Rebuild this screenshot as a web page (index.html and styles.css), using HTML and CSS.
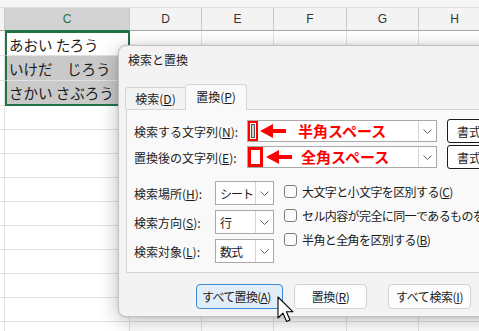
FILE: index.html
```html
<!DOCTYPE html>
<html lang="ja">
<head>
<meta charset="utf-8">
<title>検索と置換</title>
<link rel="stylesheet" href="styles.css">
</head>
<body>
<div class="sheet">
  <div class="topstrip"></div>
  <div class="grow head">
    <div class="cell"></div>
    <div class="cell selcol">C</div>
    <div class="cell">D</div>
    <div class="cell">E</div>
    <div class="cell">F</div>
    <div class="cell">G</div>
    <div class="cell">H</div>
    <div class="cell"></div>
  </div>
  <div class="grow">
    <div class="cell"></div>
    <div class="cell csel c-top">あおい たろう</div>
    <div class="cell"></div><div class="cell"></div><div class="cell"></div><div class="cell"></div><div class="cell"></div><div class="cell"></div>
  </div>
  <div class="grow">
    <div class="cell"></div>
    <div class="cell csel c-mid">いけだ　じろう</div>
    <div class="cell"></div><div class="cell"></div><div class="cell"></div><div class="cell"></div><div class="cell"></div><div class="cell"></div>
  </div>
  <div class="grow">
    <div class="cell"></div>
    <div class="cell csel c-bot">さかい さぶろう</div>
    <div class="cell"></div><div class="cell"></div><div class="cell"></div><div class="cell"></div><div class="cell"></div><div class="cell"></div>
  </div>
  <div class="grow short"><div class="cell"></div><div class="cell"></div><div class="cell"></div><div class="cell"></div><div class="cell"></div><div class="cell"></div><div class="cell"></div><div class="cell"></div></div>
  <div class="grow short"><div class="cell"></div><div class="cell"></div><div class="cell"></div><div class="cell"></div><div class="cell"></div><div class="cell"></div><div class="cell"></div><div class="cell"></div></div>
  <div class="grow short"><div class="cell"></div><div class="cell"></div><div class="cell"></div><div class="cell"></div><div class="cell"></div><div class="cell"></div><div class="cell"></div><div class="cell"></div></div>
  <div class="grow short"><div class="cell"></div><div class="cell"></div><div class="cell"></div><div class="cell"></div><div class="cell"></div><div class="cell"></div><div class="cell"></div><div class="cell"></div></div>
  <div class="grow short"><div class="cell"></div><div class="cell"></div><div class="cell"></div><div class="cell"></div><div class="cell"></div><div class="cell"></div><div class="cell"></div><div class="cell"></div></div>
  <div class="grow short"><div class="cell"></div><div class="cell"></div><div class="cell"></div><div class="cell"></div><div class="cell"></div><div class="cell"></div><div class="cell"></div><div class="cell"></div></div>
  <div class="grow short"><div class="cell"></div><div class="cell"></div><div class="cell"></div><div class="cell"></div><div class="cell"></div><div class="cell"></div><div class="cell"></div><div class="cell"></div></div>
  <div class="grow short"><div class="cell"></div><div class="cell"></div><div class="cell"></div><div class="cell"></div><div class="cell"></div><div class="cell"></div><div class="cell"></div><div class="cell"></div></div>
  <div class="grow short"><div class="cell"></div><div class="cell"></div><div class="cell"></div><div class="cell"></div><div class="cell"></div><div class="cell"></div><div class="cell"></div><div class="cell"></div></div>
  <div class="grow short"><div class="cell"></div><div class="cell"></div><div class="cell"></div><div class="cell"></div><div class="cell"></div><div class="cell"></div><div class="cell"></div><div class="cell"></div></div>
</div>

<div class="dialog">
  <div class="title">検索と置換</div>
  <div class="tabs">
    <div class="tab tab-off">検索(<u>D</u>)</div>
    <div class="tab tab-on">置換(<u>P</u>)</div>
  </div>
  <div class="panel">
    <div class="frow">
      <div class="flabel">検索する文字列(<u>N</u>):</div>
      <div class="combo wide">
        <div class="cval">
          <span class="mark mark-half"><span class="selbar"></span></span>
          <svg class="arrow" width="26" height="14" viewBox="0 0 26 14"><polygon points="0,7 13,0 13,5 26,5 26,9 13,9 13,14" fill="#ff0000"/></svg>
          <span class="note">半角スペース</span>
        </div>
        <div class="cbtn"><svg width="9" height="5" viewBox="0 0 9 5"><path d="M0.5 0.5 L4.5 4.5 L8.5 0.5" fill="none" stroke="#606060" stroke-width="1"/></svg></div>
      </div>
      <div class="fmtbtn">書式(<u>M</u>)...</div>
    </div>
    <div class="frow second">
      <div class="flabel">置換後の文字列(<u>E</u>):</div>
      <div class="combo wide">
        <div class="cval">
          <span class="mark mark-full"></span>
          <svg class="arrow arrow2" width="26" height="14" viewBox="0 0 26 14"><polygon points="0,7 13,0 13,5 26,5 26,9 13,9 13,14" fill="#ff0000"/></svg>
          <span class="note note2">全角スペース</span>
        </div>
        <div class="cbtn"><svg width="9" height="5" viewBox="0 0 9 5"><path d="M0.5 0.5 L4.5 4.5 L8.5 0.5" fill="none" stroke="#606060" stroke-width="1"/></svg></div>
      </div>
      <div class="fmtbtn">書式(<u>A</u>)...</div>
    </div>
    <div class="lower">
      <div class="opts">
        <div class="orow">
          <div class="olabel">検索場所(<u>H</u>):</div>
          <div class="combo small"><div class="cval">シート</div><div class="cbtn"><svg width="9" height="5" viewBox="0 0 9 5"><path d="M0.5 0.5 L4.5 4.5 L8.5 0.5" fill="none" stroke="#606060" stroke-width="1"/></svg></div></div>
        </div>
        <div class="orow">
          <div class="olabel">検索方向(<u>S</u>):</div>
          <div class="combo small"><div class="cval">行</div><div class="cbtn"><svg width="9" height="5" viewBox="0 0 9 5"><path d="M0.5 0.5 L4.5 4.5 L8.5 0.5" fill="none" stroke="#606060" stroke-width="1"/></svg></div></div>
        </div>
        <div class="orow">
          <div class="olabel">検索対象(<u>L</u>):</div>
          <div class="combo small"><div class="cval">数式</div><div class="cbtn"><svg width="9" height="5" viewBox="0 0 9 5"><path d="M0.5 0.5 L4.5 4.5 L8.5 0.5" fill="none" stroke="#606060" stroke-width="1"/></svg></div></div>
        </div>
      </div>
      <div class="checks">
        <div class="crow"><span class="cbox"></span><span class="clabel">大文字と小文字を区別する(<u>C</u>)</span></div>
        <div class="crow"><span class="cbox"></span><span class="clabel">セル内容が完全に同一であるものを検索する(<u>O</u>)</span></div>
        <div class="crow"><span class="cbox"></span><span class="clabel">半角と全角を区別する(<u>B</u>)</span></div>
      </div>
    </div>
  </div>
  <div class="btns">
    <div class="btn hover b1">すべて置換(<u>A</u>)</div>
    <div class="btn b2">置換(<u>R</u>)</div>
    <div class="btn b3">すべて検索(<u>I</u>)</div>
    <div class="btn b4">次を検索(<u>F</u>)</div>
  </div>
</div>

<svg class="cursor" width="17" height="27" viewBox="0 0 17 27">
  <path d="M1 1 V22 L6 17.2 L9.6 25.5 L13 24 L9.4 15.8 H16 Z" fill="#ffffff" stroke="#000000" stroke-width="1.1" stroke-linejoin="round"/>
</svg>
</body>
</html>
```

FILE: styles.css
```css
html, body {
  margin: 0;
  padding: 0;
}
body {
  width: 479px;
  height: 331px;
  overflow: hidden;
  position: relative;
  background: #ffffff;
  font-family: "Noto Sans CJK JP", "Noto Sans", sans-serif;
}

/* ---------- sheet ---------- */
.topstrip {
  height: 7px;
  background: #f6f6f6;
  border-bottom: 1px solid #dedede;
}
.grow {
  display: grid;
  grid-template-columns: 5px 125px 72px 72px 73px 72px 72px 72px;
  height: 25px;
}
.grow.short {
  height: 24px;
}
.cell {
  box-sizing: border-box;
  border-right: 1px solid #e1e1e1;
  border-bottom: 1px solid #e1e1e1;
  min-width: 0;
  overflow: hidden;
  white-space: nowrap;
}
.head {
  height: 23px;
  background: #f3f3f3;
}
.head .cell {
  border-right: 1px solid #c8c8c8;
  border-bottom: 1px solid #a8a8a8;
  display: flex;
  align-items: center;
  justify-content: center;
  font-family: "Liberation Sans", sans-serif;
  font-size: 12px;
  color: #333333;
}
.head .cell.selcol {
  background: #d3d3d3;
  color: #217346;
  border-bottom: 1px solid #217346;
}
.csel {
  display: flex;
  align-items: center;
  padding-left: 2px;
  font-size: 14.5px;
  color: #1a1a1a;
  border-left: 2px solid #217346;
  border-right: 2px solid #217346;
}
.c-top {
  border-top: 2px solid #217346;
  background: #ffffff;
}
.c-mid {
  background: #c9c9c9;
}
.c-bot {
  background: #c9c9c9;
  border-bottom: 2px solid #217346;
}

/* ---------- dialog ---------- */
.dialog {
  position: absolute;
  left: 118px;
  top: 45px;
  width: 420px;
  height: 272px;
  box-sizing: border-box;
  background: #f3f3f3;
  border: 1px solid #c2c2c2;
  border-radius: 8px;
  box-shadow: 0 4px 20px rgba(0, 0, 0, 0.26), 0 0 3px rgba(0, 0, 0, 0.12);
  font-size: 12px;
  color: #1b1b1b;
  overflow: hidden;
}
.title {
  box-sizing: border-box;
  height: 38px;
  padding: 6px 0 0 9px;
  line-height: 16px;
}
.tabs {
  display: flex;
  align-items: flex-end;
  height: 25px;
  padding-left: 6px;
}
.tab {
  box-sizing: border-box;
  display: flex;
  align-items: center;
  justify-content: center;
  border: 1px solid #d6d6d6;
  border-bottom: none;
  line-height: 16px;
}
.tab-off {
  width: 60px;
  height: 22px;
  border-right: none;
  border-radius: 3px 0 0 0;
}
.tab-on {
  width: 62px;
  height: 26px;
  margin-bottom: -1px;
  background: #f9f9f9;
  border-radius: 3px 3px 0 0;
  position: relative;
  z-index: 1;
  padding-bottom: 2px;
}
.panel {
  box-sizing: border-box;
  margin-left: 7px;
  width: 420px;
  height: 164px;
  border: 1px solid #d6d6d6;
  background: #f9f9f9;
  padding: 9px 0 0 7px;
}
.frow {
  display: flex;
  align-items: center;
  height: 24px;
}
.frow.second {
  margin-top: 2px;
}
.flabel {
  width: 113px;
  flex: none;
  white-space: nowrap;
}
.combo {
  box-sizing: border-box;
  display: flex;
  background: #ffffff;
  border: 1px solid #a9a9a9;
  flex: none;
}
.combo.wide {
  width: 190px;
  height: 22px;
}
.combo.small {
  width: 59px;
  height: 24px;
}
.cval {
  flex: 1;
  display: flex;
  align-items: center;
  min-width: 0;
  white-space: nowrap;
}
.combo.small .cval {
  padding-left: 4px;
  letter-spacing: -1px;
}
.cbtn {
  width: 17px;
  flex: none;
  display: flex;
  align-items: center;
  justify-content: center;
  border-left: 1px solid #d4d4d4;
}
.mark {
  box-sizing: border-box;
  flex: none;
  display: flex;
  align-items: center;
  justify-content: center;
  align-self: center;
}
.mark-half {
  width: 10px;
  height: 20px;
  border: 2px solid #ff0000;
  background: #ffffff;
}
.selbar {
  display: block;
  width: 4px;
  height: 14px;
  box-sizing: border-box;
  background: #cfcfcf;
  border: 1px solid #555555;
}
.mark-full {
  width: 15px;
  height: 20px;
  border: 3px solid #ff0000;
  background: #ffffff;
}
.arrow {
  flex: none;
  margin-left: 2px;
}
.arrow2 {
  margin-left: 3px;
}
.note {
  margin-left: 12px;
  color: #ff0000;
  font-weight: bold;
  font-size: 15px;
  line-height: 18px;
}
.note2 {
  margin-left: 9px;
}
.fmtbtn {
  box-sizing: border-box;
  margin-left: 10px;
  width: 80px;
  height: 24px;
  flex: none;
  display: flex;
  align-items: center;
  padding-left: 9px;
  border: 1px solid #1a1a1a;
  border-radius: 3px;
  background: #ffffff;
  white-space: nowrap;
}
.lower {
  display: flex;
  margin-top: 12px;
}
.opts {
  display: flex;
  flex-direction: column;
  gap: 5px;
}
.orow {
  display: flex;
  align-items: center;
  height: 24px;
}
.olabel {
  width: 81px;
  white-space: nowrap;
}
.checks {
  margin-left: 10px;
  margin-top: -2px;
  display: flex;
  flex-direction: column;
}
.crow {
  display: flex;
  align-items: center;
  height: 24px;
  white-space: nowrap;
}
.cbox {
  box-sizing: border-box;
  width: 13px;
  height: 13px;
  border: 1px solid #7d7d7d;
  border-radius: 3px;
  background: #fbfbfb;
  flex: none;
}
.clabel {
  margin-left: 5px;
  letter-spacing: -0.6px;
}
.btns {
  display: flex;
  margin-top: 11px;
  padding-left: 77px;
}
.btn {
  box-sizing: border-box;
  height: 25px;
  display: flex;
  align-items: center;
  justify-content: center;
  border: 1px solid #d1d1d1;
  border-radius: 4px;
  background: #fdfdfd;
  white-space: nowrap;
  flex: none;
  letter-spacing: -0.4px;
}
.btn.hover {
  background: #e0eef9;
  border-color: #3d8ad6;
  justify-content: flex-start;
  padding-left: 5px;
  letter-spacing: -0.7px;
}
.b1 { width: 87px; }
.b2 { width: 73px; margin-left: 11px; }
.b3 { width: 83px; margin-left: 21px; }
.b4 { width: 80px; margin-left: 11px; }

.cursor {
  position: absolute;
  left: 277px;
  top: 296px;
}
```
